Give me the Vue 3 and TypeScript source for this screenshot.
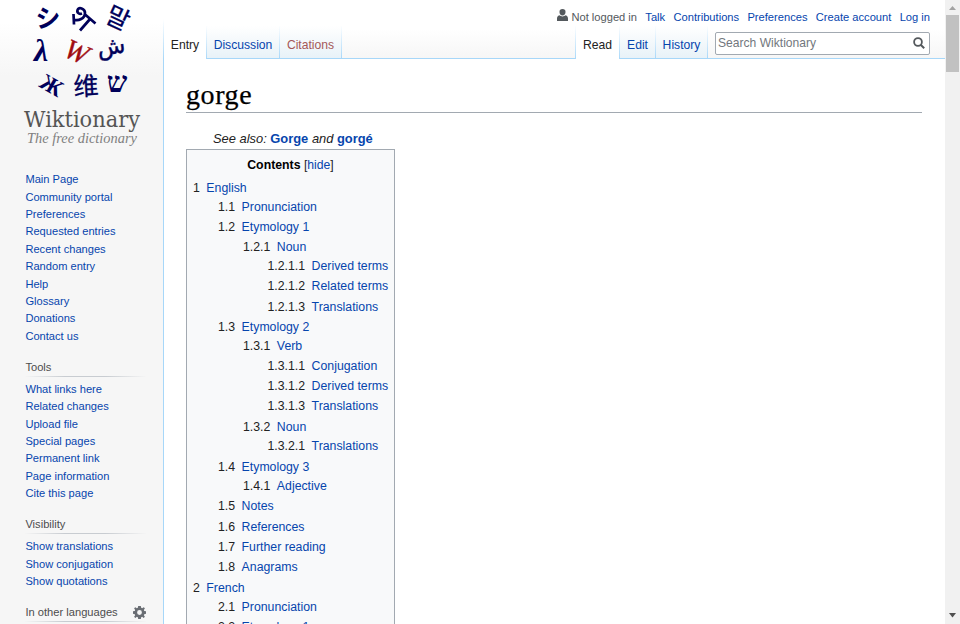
<script setup lang="ts">
interface Section { title: string; links: string[]; gear?: boolean }
interface Glyph { char: string; x: number; y: number; size: number; turn: number; font: string }
interface Entry { num: string; label: string }

const glyphs: Glyph[] = [
  { char: 'シ', x: 48, y: 27, size: 25, turn: -3, font: 'cjk' },
  { char: '말', x: 118, y: 27, size: 25, turn: 25, font: 'cjk light' },
  { char: 'λ', x: 41, y: 61, size: 32, turn: 0, font: 'greek' },
  { char: 'W', x: 77, y: 61, size: 28, turn: 24, font: 'mark' },
  { char: 'ش', x: 111, y: 54, size: 23, turn: -8, font: 'arabic' },
  { char: 'Ж', x: 52, y: 93, size: 23, turn: 30, font: 'cyrillic' },
  { char: '维', x: 86, y: 95, size: 25, turn: -3, font: 'cjk light' },
  { char: 'ש', x: 117, y: 92, size: 29, turn: 0, font: 'hebrew' },
]

const mainLinks: string[] = ['Main Page', 'Community portal', 'Preferences', 'Requested entries', 'Recent changes', 'Random entry', 'Help', 'Glossary', 'Donations', 'Contact us']
const sections: Section[] = [
  { title: 'Tools', links: ['What links here', 'Related changes', 'Upload file', 'Special pages', 'Permanent link', 'Page information', 'Cite this page'] },
  { title: 'Visibility', links: ['Show translations', 'Show conjugation', 'Show quotations'] },
  { title: 'In other languages', links: [], gear: true },
]
const personal: string[] = ['Talk', 'Contributions', 'Preferences', 'Create account', 'Log in']

const rows: string[] = [
  '1 English', '1.1 Pronunciation', '1.2 Etymology 1', '1.2.1 Noun', '1.2.1.1 Derived terms',
  '1.2.1.2 Related terms', '1.2.1.3 Translations', '1.3 Etymology 2', '1.3.1 Verb',
  '1.3.1.1 Conjugation', '1.3.1.2 Derived terms', '1.3.1.3 Translations', '1.3.2 Noun',
  '1.3.2.1 Translations', '1.4 Etymology 3', '1.4.1 Adjective', '1.5 Notes', '1.6 References',
  '1.7 Further reading', '1.8 Anagrams', '2 French', '2.1 Pronunciation', '2.2 Etymology 1',
]
const entries: Entry[] = rows.map((row) => {
  const cut = row.indexOf(' ')
  return { num: row.slice(0, cut), label: row.slice(cut + 1) }
})
const depth = (num: string): number => num.split('.').length
const opensList = (i: number): boolean => i > 0 && depth(entries[i].num) > depth(entries[i - 1].num)
</script>

<template>
  <div class="window">
    <aside class="sidebar">
      <svg class="logo" width="163" height="155" viewBox="0 0 163 155">
        <text v-for="g in glyphs" :key="g.char" :class="['glyph', g.font]" :font-size="g.size" text-anchor="middle" :x="g.x" :y="g.y" :transform="`rotate(${g.turn} ${g.x} ${g.y - g.size * 0.35})`">{{ g.char }}</text>
        <path class="stroke" d="M73.500 14l.5 10.500M73.500 19.500c5 2 11.500-1 11.500-6.500 0-4.500-6.500-6.500-7.500-3-.8 3 2 4.500 4.500 3.500M80 30.500l10.500-12M84.500 14l11 9.500" />
        <text class="wordmark" x="24" y="127" textLength="116" lengthAdjust="spacingAndGlyphs">Wiktionary</text>
        <text class="tagline" x="27" y="143" textLength="110" lengthAdjust="spacingAndGlyphs">The free dictionary</text>
      </svg>
      <nav class="links main-links"><a v-for="l in mainLinks" :key="l">{{ l }}</a></nav>
      <section v-for="s in sections" :key="s.title" class="portal">
        <h3>
          <span>{{ s.title }}</span>
          <svg v-if="s.gear" width="13" height="13" viewBox="0 0 20 20">
            <path fill="#696d73" fill-rule="evenodd" d="M8 0h4l.6 2.800 1.500.6L16.500 1.800l1.800 1.800-1.600 2.400.6 1.500L20 8v4l-2.700.6-.6 1.500 1.600 2.300-1.900 1.900-2.300-1.600-1.500.6L12 20H8l-.6-2.700-1.500-.6-2.300 1.600-1.900-1.900 1.600-2.300-.6-1.500L0 12V8l2.700-.5.6-1.500-1.600-2.400 1.900-1.800 2.300 1.600 1.500-.6zM10 6.300a3.700 3.700 0 1 0 0 7.400 3.700 3.700 0 0 0 0-7.400z" />
          </svg>
        </h3>
        <div class="links"><a v-for="l in s.links" :key="l">{{ l }}</a></div>
      </section>
    </aside>

    <div class="page">
      <header>
        <div class="personal">
          <span class="user">
            <svg width="11" height="12" viewBox="0 0 11 12"><path fill="#54595d" d="M5.500 0a3 3 0 0 1 3 3.200c0 1.700-1.200 3.300-3 3.300s-3-1.600-3-3.300A3 3 0 0 1 5.500 0zM2.300 6.300c1.800 1.500 4.600 1.500 6.400 0C10.200 6.700 11 8 11 9.500V12H0V9.500C0 8 .8 6.700 2.300 6.300z" /></svg>
            Not logged in
          </span>
          <a v-for="p in personal" :key="p">{{ p }}</a>
        </div>
        <div class="tabs">
          <a class="tab selected entry">Entry</a>
          <a class="tab discussion">Discussion</a>
          <a class="tab missing citations">Citations</a>
          <span class="spacer"></span>
          <a class="tab selected read">Read</a>
          <a class="tab edit">Edit</a>
          <a class="tab history">History</a>
          <div class="search">
            <span>Search Wiktionary</span>
            <svg width="12" height="12" viewBox="0 0 12 12" fill="none" stroke="#54595d"><circle cx="5" cy="5" r="3.900" stroke-width="1.800" /><path d="M7.700 7.700l3.500 3.500" stroke-width="2" /></svg>
          </div>
        </div>
      </header>
      <main>
        <h1>gorge</h1>
        <p class="see-also">See also: <b><a>Gorge</a></b> and <b><a>gorgé</a></b></p>
        <div class="toc">
          <div class="toc-title"><b>Contents</b> [<a>hide</a>]</div>
          <ul>
            <li v-for="(e, i) in entries" :key="e.num" :class="['level-' + depth(e.num), { nested: opensList(i) }]">
              <span class="num">{{ e.num }}</span><a>{{ e.label }}</a>
            </li>
          </ul>
        </div>
      </main>
    </div>

    <div class="scrollbar">
      <svg width="15" height="15" viewBox="0 0 15 15"><path d="M4 10l3.500-4 3.500 4z" fill="#a3a3a3" /></svg>
      <div class="thumb"></div>
      <svg width="15" height="15" viewBox="0 0 15 15"><path d="M4 4h7L7.500 8.500z" fill="#505050" /></svg>
    </div>
  </div>
</template>

<style>
body { margin: 0; overflow: hidden; }
</style>

<style scoped>
.window { width: 960px; height: 624px; display: flex; overflow: hidden; background: #fff; font: 12.900px/20px "Liberation Sans", Arial, sans-serif; color: #222; }
a { color: #0645ad; }
.sidebar { width: 163px; flex: none; background: linear-gradient(#fff 0, #fff 22px, #f6f6f6 76px); }
.logo { display: block; }
.glyph { fill: #00005a; }
.cjk { font-family: "Noto Sans CJK JP", "Noto Sans CJK KR", "Noto Sans CJK SC", sans-serif; font-weight: 700; }
.light { font-weight: 400; stroke: #00005a; stroke-width: .3; }
.greek { font-family: "Liberation Serif", serif; font-weight: bold; font-style: italic; }
.cyrillic { font-family: "Liberation Serif", serif; font-weight: bold; }
.hebrew { font-family: "Liberation Serif", serif; font-weight: bold; }
.arabic { font-family: "DejaVu Sans", sans-serif; stroke: #00005a; stroke-width: .4; }
.mark { fill: #a00b10; stroke: #a00b10; stroke-width: .4; font-family: "Liberation Serif", serif; font-style: italic; }
.stroke { fill: none; stroke: #00005a; stroke-width: 2.700; }
.wordmark { font: 21.500px "DejaVu Serif", serif; fill: #555; }
.tagline { font: italic 15px "Liberation Serif", serif; fill: #808080; }
.links { display: flex; flex-direction: column; font-size: 11.120px; }
.links a { height: 17.400px; line-height: 17.400px; white-space: nowrap; }
.main-links { padding: 16.300px 0 0 25.400px; }
.portal { padding-left: 25.400px; width: 120.600px; }
.portal h3 { margin: 13.800px 0 0; height: 17px; display: flex; align-items: center; justify-content: space-between; font-size: 11.150px; font-weight: normal; line-height: 17px; color: #4d4d4d; border-bottom: 1px solid; border-image: linear-gradient(to right, #c8ccd100, #c8ccd1 33%, #c8ccd1 66%, #c8ccd100) 1; }
.portal .links { padding-top: 3.900px; }
.page { flex: 1; min-width: 0; border-left: 1px solid; border-image: linear-gradient(#fff 20px, #a7d7f9 60px) 1; }
header { height: 59px; box-sizing: border-box; background: linear-gradient(#fff 50%, #f6f6f6); border-bottom: 1px solid #a7d7f9; }
.personal { height: 26px; box-sizing: border-box; padding: 7px 15px 0 0; display: flex; justify-content: flex-end; gap: 8.300px; font-size: 11.150px; line-height: 20px; }
.user { color: #54595d; display: flex; gap: 3px; }
.user svg { margin-top: 2px; }
.tabs { height: 33px; display: flex; }
.tab { box-sizing: border-box; height: 32px; padding-top: 9px; text-align: center; font-size: 12.150px; line-height: 20px; border-right: 1px solid; border-image: linear-gradient(#fff, #a7d7f9) 1; background: linear-gradient(#fff, #e8f2f8); }
.tab.selected { height: 33px; color: #222; background: #fff; }
.tab.missing { color: #a55858; }
.entry { width: 43px; }
.discussion { width: 73px; }
.citations { width: 62px; }
.spacer { flex: 1; border-right: 1px solid; border-image: linear-gradient(#fff, #a7d7f9) 1; }
.read { width: 44px; }
.edit { width: 36px; }
.history { width: 52px; }
.search { box-sizing: border-box; width: 215px; height: 23px; margin: 6px 15px 0 7px; border: 1px solid #a2a9b1; border-radius: 2px; background: #fffffff0; display: flex; justify-content: space-between; align-items: center; padding: 0 4px 1px 2px; font-size: 12.100px; color: #72777d; }
main { padding: 0 23px 0 22px; }
h1 { margin: 18px 0 0; height: 35px; font: 28px/36px "Liberation Serif", serif; letter-spacing: .600px; color: #000; -webkit-text-stroke: .25px #000; border-bottom: 1px solid #a2a9b1; }
.see-also { margin: 15px 0 0 27px; height: 21px; line-height: 21px; font-style: italic; }
.see-also b { font-style: normal; }
.toc { box-sizing: border-box; width: 209px; height: 600px; border: 1px solid #a2a9b1; background: #f8f9fa; padding: 5px 6px; }
.toc-title { text-align: center; font-size: 12.200px; line-height: 20px; height: 20px; }
.toc-title b { color: #000; font-size: 12.300px; }
ul { list-style: none; margin: 2.500px 0 0; padding: 0; font-size: 12.300px; }
li { height: 20px; line-height: 20px; display: flex; white-space: nowrap; margin-top: .4px; }
li.nested { margin-top: -.700px; }
.num { padding-right: 6.500px; }
.level-2 { padding-left: 25px; }
.level-3 { padding-left: 50px; }
.level-4 { padding-left: 74.500px; }
.scrollbar { width: 15px; flex: none; display: flex; flex-direction: column; align-items: center; background: #f1f1f1; }
.scrollbar svg { display: block; }
.scrollbar svg:last-child { margin-top: auto; }
.thumb { width: 13px; height: 57px; background: #c1c1c1; }
</style>
